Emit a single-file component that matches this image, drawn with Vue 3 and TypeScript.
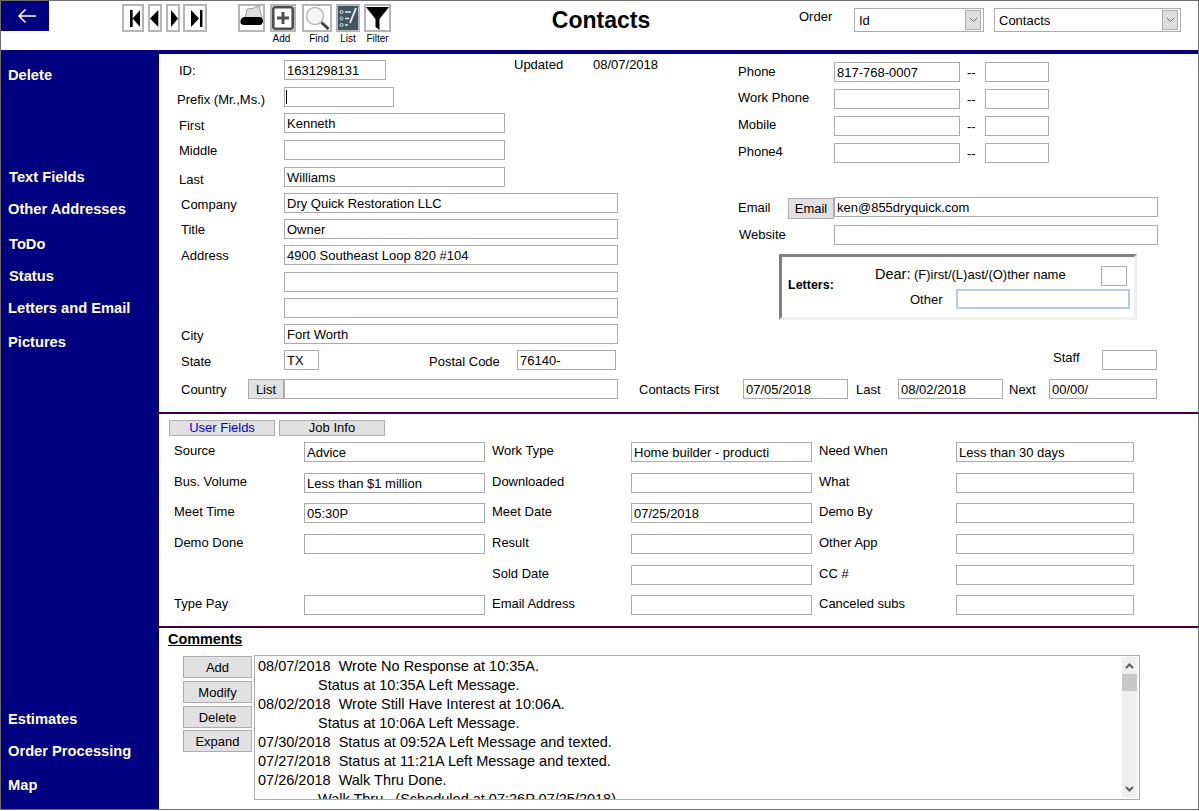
<script setup lang="ts">
interface LeftRow { label: string; value: string; indent: string; drop: string; width: string }
const leftTop: LeftRow[] = [
  { label: 'First', value: 'Kenneth', indent: 'i20', drop: 'd2', width: 'w221' },
  { label: 'Middle', value: '', indent: 'i20', drop: '', width: 'w221' },
  { label: 'Last', value: 'Williams', indent: 'i20', drop: 'd2', width: 'w221' },
  { label: 'Company', value: 'Dry Quick Restoration LLC', indent: 'i22', drop: 'd1', width: 'w334' },
  { label: 'Title', value: 'Owner', indent: 'i22', drop: '', width: 'w334' },
  { label: 'Address', value: '4900 Southeast Loop 820 #104', indent: 'i22', drop: '', width: 'w334' },
  { label: '', value: '', indent: 'i22', drop: '', width: 'w334' },
  { label: '', value: '', indent: 'i22', drop: '', width: 'w334' },
  { label: 'City', value: 'Fort Worth', indent: 'i22', drop: 'd1', width: 'w334' },
]
const phones = [
  { label: 'Phone', value: '817-768-0007' },
  { label: 'Work Phone', value: '' },
  { label: 'Mobile', value: '' },
  { label: 'Phone4', value: '' },
]
const userFields: [string, string][] = [
  ['Source', 'Advice'], ['Work Type', 'Home builder - producti'], ['Need When', 'Less than 30 days'],
  ['Bus. Volume', 'Less than $1 million'], ['Downloaded', ''], ['What', ''],
  ['Meet Time', '05:30P'], ['Meet Date', '07/25/2018'], ['Demo By', ''],
  ['Demo Done', ''], ['Result', ''], ['Other App', ''],
  ['', ''], ['Sold Date', ''], ['CC #', ''],
  ['Type Pay', ''], ['Email Address', ''], ['Canceled subs', ''],
]
const comments = [
  { text: '08/07/2018  Wrote No Response at 10:35A.', sub: false },
  { text: 'Status at 10:35A Left Message.', sub: true },
  { text: '08/02/2018  Wrote Still Have Interest at 10:06A.', sub: false },
  { text: 'Status at 10:06A Left Message.', sub: true },
  { text: '07/30/2018  Status at 09:52A Left Message and texted.', sub: false },
  { text: '07/27/2018  Status at 11:21A Left Message and texted.', sub: false },
  { text: '07/26/2018  Walk Thru Done.', sub: false },
  { text: 'Walk Thru.  (Scheduled at 07:26P 07/25/2018)', sub: true },
]
</script>

<template>
  <div class="app">
    <header class="toolbar">
      <button class="back" aria-label="Back">
        <svg width="22" height="16" viewBox="0 0 22 16"><path d="M20 8H3M9.500 1.500 3 8l6.500 6.500" fill="none" stroke="#fff" stroke-width="1.600" /></svg>
      </button>
      <div class="nav">
        <button class="nb w22"><svg width="18" height="24" viewBox="0 0 18 24"><path d="M6 4h2.700v17H6zM8.700 12.500 16 4v17z" /></svg></button>
        <button class="nb w14"><svg width="10" height="24" viewBox="0 0 10 24"><path d="M0 12.500 8.300 4v17z" /></svg></button>
        <button class="nb w14"><svg width="10" height="24" viewBox="0 0 10 24"><path d="M3 4l7 8.500L3 21z" /></svg></button>
        <button class="nb w24 last"><svg width="20" height="24" viewBox="0 0 20 24"><path d="M6 4l8 8.500L6 21zM15 4h2.400v17H15z" /></svg></button>
      </div>
      <div class="tools">
        <div class="tool t27">
          <button class="ib">
            <svg width="23" height="24" viewBox="0 0 23 24"><path d="M5 12 7 3q6 0 12-3l3 12z" fill="#dcdcdc" stroke="#8c8c8c" stroke-width=".8" /><path d="M5 11h15q3 1 3 4t-3 4H4q-4 0-3.500-4T5 11z" /></svg>
          </button>
        </div>
        <div class="tool t26 lAdd">
          <button class="ib">
            <svg width="22" height="24" viewBox="0 0 22 24"><rect x="1.300" y="1.300" width="19.400" height="21.400" rx="2" fill="#fff" stroke="#505050" stroke-width="2.600" /><path d="M11 6v12M5 12h12" stroke="#505050" stroke-width="3" /></svg>
          </button>
          <span>Add</span>
        </div>
        <div class="tool t30 lFind">
          <button class="ib">
            <svg width="26" height="24" viewBox="0 0 26 24"><circle cx="11" cy="10" r="8.500" fill="#f6f6f6" stroke="#b8b8b8" stroke-width="1.500" /><path d="M17.500 16.500 24.500 23" stroke="#454545" stroke-width="3" /></svg>
          </button>
          <span>Find</span>
        </div>
        <div class="tool t24">
          <button class="ib">
            <svg width="20" height="24" viewBox="0 0 20 24"><rect width="20" height="24" fill="#3f5560" /><g fill="none" stroke="#dfe6e8"><circle cx="3.500" cy="6" r="1.500" /><circle cx="3.500" cy="12.500" r="1.500" /><circle cx="3.500" cy="19" r="1.500" /><path d="M7 6h6M7 12.500h4M7 19h3" stroke-width="1.300" /><path d="M18 2 12 17" stroke-width="2" /></g></svg>
          </button>
          <span>List</span>
        </div>
        <div class="tool t27">
          <button class="ib">
            <svg width="23" height="24" viewBox="0 0 23 24"><path d="M0 1h23L13.500 13v11L9.500 21v-8z" /></svg>
          </button>
          <span>Filter</span>
        </div>
      </div>
      <h1 class="title">Contacts</h1>
      <label class="orderLabel">Order</label>
      <div class="select s130"><span>Id</span><i class="drop"><svg width="9" height="6" viewBox="0 0 9 6"><path d="M1 1l3.500 3.500L8 1" fill="none" stroke="#666" /></svg></i></div>
      <div class="select s187"><span>Contacts</span><i class="drop"><svg width="9" height="6" viewBox="0 0 9 6"><path d="M1 1l3.500 3.500L8 1" fill="none" stroke="#666" /></svg></i></div>
    </header>
    <div class="rule"></div>

    <div class="body">
      <nav class="side">
        <a class="n">Delete</a>
        <a class="n g82 x1">Text Fields</a>
        <a class="n g12">Other Addresses</a>
        <a class="n g15 x1">ToDo</a>
        <a class="n g12 x1">Status</a>
        <a class="n g12">Letters and Email</a>
        <a class="n g14">Pictures</a>
        <a class="n bottom">Estimates</a>
        <a class="n g12">Order Processing</a>
        <a class="n g14">Map</a>
      </nav>

      <main class="main">
        <section class="contact">
          <div class="left">
            <div class="r">
              <label class="lab i20">ID:</label>
              <input class="w102" readonly value="1631298131" />
              <span class="updated">Updated</span>
              <span class="updatedDate">08/07/2018</span>
            </div>
            <div class="r">
              <label class="lab i18 d2">Prefix (Mr.,Ms.)</label>
              <span class="caretWrap"><input class="w110" readonly value="" /><i class="caret"></i></span>
            </div>
            <div v-for="(row, idx) in leftTop" :key="idx" class="r">
              <label class="lab" :class="[row.indent, row.drop]">{{ row.label }}</label>
              <input :class="row.width" readonly :value="row.value" />
            </div>
            <div class="r">
              <label class="lab i22 d1">State</label>
              <input class="w35" readonly value="TX" />
              <label class="postal d1">Postal Code</label>
              <input class="w99" readonly value="76140-" />
            </div>
            <div class="r">
              <label class="lab countryLab i22">Country</label>
              <button class="btn list">List</button>
              <input class="w334" readonly value="" />
            </div>
          </div>

          <div class="right">
            <div v-for="p in phones" :key="p.label" class="pr phoneRow">
              <label class="plab">{{ p.label }}</label>
              <input class="w126" readonly :value="p.value" />
              <span class="dash">--</span>
              <input class="w64" readonly value="" />
            </div>
            <div class="pr email">
              <label class="elab">Email</label>
              <button class="btn emailBtn">Email</button>
              <input class="w324" readonly value="ken@855dryquick.com" />
            </div>
            <div class="pr website">
              <label class="plab wlab">Website</label>
              <input class="w324" readonly value="" />
            </div>
            <div class="letters">
              <b class="lettersLab">Letters:</b>
              <div class="lettersBody">
                <div class="dearRow">
                  <span class="dear">Dear:</span>
                  <span class="dearOpts">(F)irst/(L)ast/(O)ther name</span>
                  <input class="w26" readonly value="" />
                </div>
                <div class="otherRow">
                  <span class="otherLab">Other</span>
                  <input class="w174 focus" readonly value="" />
                </div>
              </div>
            </div>
            <div class="staff">
              <label class="staffLab">Staff</label>
              <input class="w55" readonly value="" />
            </div>
            <div class="dates">
              <label class="cf">Contacts First</label>
              <input class="w105" readonly value="07/05/2018" />
              <label class="cl">Last</label>
              <input class="w105" readonly value="08/02/2018" />
              <label class="cn">Next</label>
              <input class="w108" readonly value="00/00/" />
            </div>
          </div>
        </section>

        <div class="divider"></div>

        <section class="user">
          <div class="tabs">
            <button class="tab active">User Fields</button>
            <button class="tab">Job Info</button>
          </div>
          <div class="ugrid">
            <template v-for="(f, i) in userFields" :key="i">
              <label class="ulab">{{ f[0] }}</label>
              <input v-if="f[0]" readonly :value="f[1]" />
              <span v-else></span>
            </template>
          </div>
        </section>

        <div class="divider"></div>

        <section class="comments">
          <h2>Comments</h2>
          <div class="cbody">
            <div class="cbtns">
              <button class="btn cb">Add</button>
              <button class="btn cb">Modify</button>
              <button class="btn cb">Delete</button>
              <button class="btn cb expand">Expand</button>
            </div>
            <div class="cbox">
              <div class="ctext">
                <div v-for="(c, i) in comments" :key="i" class="cline" :class="{ sub: c.sub }">{{ c.text }}</div>
              </div>
              <div class="sb">
                <svg class="sba" width="15" height="17" viewBox="0 0 15 17"><path d="M4 11l3.500-3.500L11 11" fill="none" stroke="#606060" stroke-width="2" /></svg>
                <div class="thumb"></div>
                <svg class="sba down" width="15" height="17" viewBox="0 0 15 17"><path d="M4 6l3.500 3.500L11 6" fill="none" stroke="#606060" stroke-width="2" /></svg>
              </div>
            </div>
          </div>
        </section>
      </main>
    </div>
    <i class="tick"></i>
  </div>
</template>

<style>
html, body { margin: 0; background: #fff; }
</style>

<style scoped>
* { box-sizing: border-box; }
.app {
  position: relative;
  width: 1199px;
  height: 810px;
  border: 1px solid #6e6e6e;
  display: flex;
  flex-direction: column;
  font-family: "Liberation Sans", Arial, sans-serif;
  font-size: 13px;
  color: #000;
  background: #fff;
}
button { font: inherit; color: inherit; padding: 0; margin: 0; }
input {
  font-family: inherit;
  font-size: 13px;
  height: 20px;
  width: 100%;
  border: 1px solid #ababab;
  padding: 1px 2px 0;
  margin: 0;
  outline: none;
  color: #000;
  background: #fff;
  flex: none;
  display: block;
}

.toolbar { height: 49px; display: flex; align-items: flex-start; flex: none; }
.back { width: 48px; height: 30px; background: #000080; border: 0; display: flex; align-items: center; justify-content: center; flex: none; }
.back svg { margin-left: 3px; }
.nav { display: flex; margin: 3px 0 0 73px; gap: 4px; }
.nb { height: 28px; border: 2px solid #b5b5b5; background: #fff; display: flex; align-items: center; justify-content: center; }
.nb svg { fill: #000; display: block; flex: none; }
.nb.last { margin-left: -1px; }
.w22 { width: 22px; }
.w14 { width: 14px; }
.w24 { width: 24px; }
.tools { display: flex; margin: 3px 0 0 31px; gap: 5px; }
.tool { display: flex; flex-direction: column; align-items: center; }
.tool span { font-size: 10px; line-height: 12px; margin-top: 1px; }
.t27 { width: 27px; }
.t26 { width: 26px; }
.t30 { width: 30px; margin-left: 1px; }
.t24 { width: 24px; margin-left: -1px; margin-right: -1px; }
.lAdd span { margin-right: 3px; }
.lFind span { margin-left: 4px; }
.ib { width: 100%; height: 28px; border: 2px solid #b5b5b5; background: #fff; display: flex; align-items: center; justify-content: center; flex: none; overflow: hidden; }
.ib svg { display: block; flex: none; }
.title { width: 396px; margin: 6px 0 0 12px; font-size: 23px; line-height: 26px; font-weight: 700; text-align: center; flex: none; }
.orderLabel { width: 55px; margin-top: 8px; line-height: 16px; flex: none; }
.select { height: 24px; margin-top: 7px; border: 1px solid #ababab; display: flex; align-items: center; justify-content: space-between; padding: 0 2px 0 4px; flex: none; }
.s130 { width: 130px; margin-right: 10px; }
.s187 { width: 187px; }
.drop { width: 16px; height: 20px; background: #ddd; border: 1px solid #ababab; display: flex; align-items: center; justify-content: center; }

.rule { height: 4px; background: #000080; flex: none; }
.body { flex: 1; display: flex; min-height: 0; }
.side { width: 158px; background: #000080; display: flex; flex-direction: column; padding: 11px 0 14px 7px; flex: none; }
.n { color: #fff; font-weight: 700; font-size: 14.7px; line-height: 20px; }
.x1 { margin-left: 1px; }
.g82 { margin-top: 82px; }
.g12 { margin-top: 12px; }
.g14 { margin-top: 14px; }
.g15 { margin-top: 15px; }
.bottom { margin-top: auto; }

.main { flex: 1; min-width: 0; display: flex; flex-direction: column; }
.contact { height: 358px; display: flex; flex: none; }
.left { width: 480px; flex: none; display: grid; grid-template-rows: 27px 26px 27px 27px 26px 26px 26px 27px 26px 26px 26px 29px 20px; padding-top: 6px; align-content: start; }
.r { display: flex; height: 20px; align-items: center; }
.lab { width: 125px; flex: none; white-space: nowrap; }
.i18 { padding-left: 18px; }
.i20 { padding-left: 20px; }
.i22 { padding-left: 22px; }
.d1 { padding-top: 2px; }
.d2 { padding-top: 4px; }
.w102 { width: 102px; }
.w110 { width: 110px; }
.w221 { width: 221px; }
.w334 { width: 334px; }
.w35 { width: 35px; }
.w99 { width: 99px; }
.w126 { width: 126px; }
.w64 { width: 64px; }
.w324 { width: 324px; }
.w26 { width: 26px; }
.w174 { width: 174px; }
.w55 { width: 55px; }
.w105 { width: 105px; }
.w108 { width: 108px; }
.caretWrap { position: relative; display: block; }
.caret { position: absolute; left: 2px; top: 3px; width: 1px; height: 14px; background: #000; }
.updated { margin: 0 0 12px 128px; white-space: nowrap; width: 79px; flex: none; }
.updatedDate { margin-bottom: 12px; white-space: nowrap; }
.postal { margin-left: 110px; width: 88px; flex: none; white-space: nowrap; }
.countryLab { width: 89px; }
.list { width: 36px; height: 20px; }
.btn { background: #e1e1e1; border: 1px solid #adadad; }

.right { flex: 1; min-width: 0; display: flex; flex-direction: column; padding-top: 8px; }
.pr { display: flex; align-items: center; height: 20px; margin-bottom: 7px; padding-left: 99px; }
.plab { width: 96px; flex: none; padding-bottom: 2px; white-space: nowrap; }
.phoneRow + .phoneRow .plab { padding-bottom: 4px; }
.dash { width: 25px; padding-left: 7px; flex: none; }
.email { margin: 27px 0 8px; }
.elab { width: 50px; flex: none; padding-bottom: 0; }
.emailBtn { width: 46px; height: 21px; margin-top: 2px; flex: none; }
.website { margin-bottom: 9px; }
.wlab { padding-left: 1px; padding-bottom: 2px; }
.letters {
  width: 358px; height: 66px; margin-left: 140px; flex: none;
  border-style: solid; border-width: 3px; border-color: #808080 #f0f0f0 #f0f0f0 #808080;
  display: flex;
}
.lettersLab { width: 93px; padding: 21px 0 0 6px; flex: none; font-size: 12.5px; }
.lettersBody { flex: 1; min-width: 0; display: flex; flex-direction: column; padding-top: 9px; }
.dearRow { display: flex; align-items: center; height: 20px; }
.dear { font-size: 14.5px; width: 39px; padding-bottom: 4px; flex: none; }
.dearOpts { width: 187px; padding-bottom: 4px; flex: none; }
.otherRow { display: flex; align-items: center; height: 20px; margin-top: 3px; padding-left: 35px; }
.otherLab { width: 46px; flex: none; }
.focus { border: 2px solid #b5cde6; }
.staff { margin: 30px 0 0; display: flex; align-items: center; height: 20px; padding-left: 414px; }
.staffLab { width: 49px; flex: none; padding-bottom: 6px; }
.dates { display: flex; align-items: center; margin-top: 9px; height: 20px; }
.cf { width: 104px; flex: none; white-space: nowrap; }
.cl { width: 50px; padding-left: 8px; flex: none; }
.cn { width: 46px; padding-left: 6px; flex: none; }

.divider { height: 2px; margin-left: -3px; background: #400040; flex: none; position: relative; }

.user { height: 212px; flex: none; padding: 6px 0 0 15px; }
.tabs { display: flex; gap: 4px; margin-left: -5px; }
.tab { width: 106px; height: 16px; background: #e1e1e1; border: 1px solid #adadad; font-size: 13px; line-height: 14px; }
.active { color: #0000e0; }
.ugrid {
  margin-top: 6px;
  display: grid;
  grid-template-columns: 130px 181px 146px 181px 144px 178px;
  grid-template-rows: 31px 30px 31px 31px 30px 20px;
}
.ulab { white-space: nowrap; align-self: start; line-height: 16px; padding-top: 1px; }
.ugrid .ulab:nth-child(6n + 3), .ugrid .ulab:nth-child(6n + 5) { padding-left: 7px; }

.comments { flex: 1; min-height: 0; padding: 0 0 0 9px; }
h2 { margin: 2px 0 0; font-size: 14.4px; line-height: 18px; font-weight: 700; text-decoration: underline; }
.cbody { display: flex; margin-top: 7px; }
.cbtns { display: flex; flex-direction: column; margin: 1px 2px 0 15px; gap: 3px; }
.cb { width: 69px; height: 22px; }
.expand { margin-top: -1px; }
.cbox { width: 886px; height: 145px; border: 1px solid #ababab; display: flex; overflow: hidden; }
.ctext { flex: 1; min-width: 0; padding: 1px 0 0 3px; overflow: hidden; font-size: 14.5px; line-height: 19px; white-space: pre; }
.sub { padding-left: 60px; }
.sb { width: 15px; flex: none; margin: 1px 2px 1px 0; background: #efefef; display: flex; flex-direction: column; }
.sba { display: block; flex: none; }
.thumb { height: 17px; background: #c8c8c8; flex: none; }
.down { margin-top: auto; }
.tick { position: absolute; left: 1019px; top: 809px; width: 1px; height: 1px; background: #000; }
</style>
